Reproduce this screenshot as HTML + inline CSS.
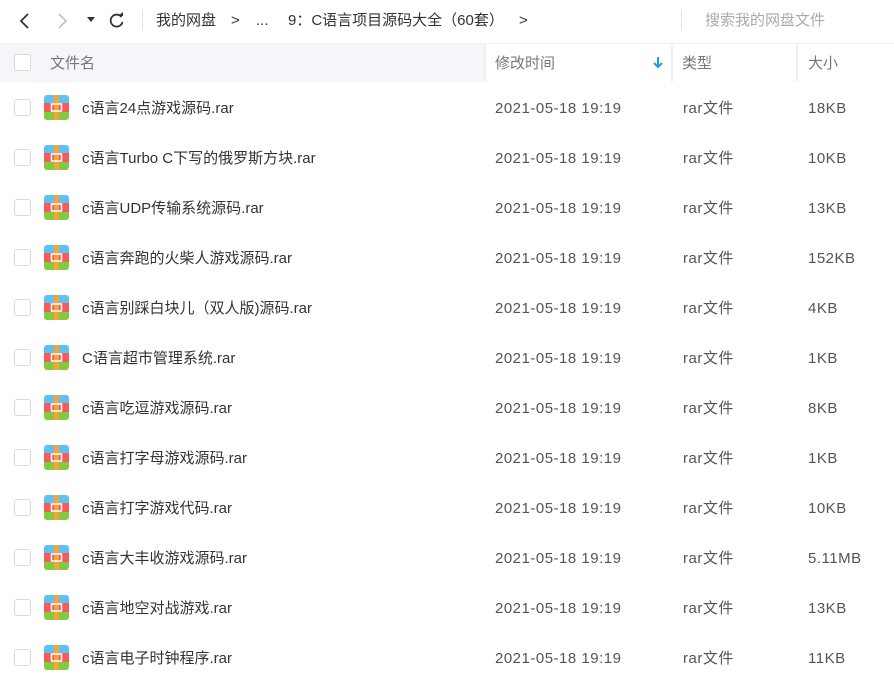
<!DOCTYPE html>
<html><head><meta charset="utf-8"><style>
*{margin:0;padding:0;box-sizing:border-box}
body{width:894px;height:696px;background:#fff;font-family:"Liberation Sans","Noto Sans CJK SC",sans-serif;color:#333;font-size:15px;position:relative;overflow:hidden}
.top{position:absolute;left:0;top:0;width:894px;height:44px;background:#fff;border-bottom:1px solid #eef0f4}
.t{position:absolute;top:11px;line-height:20px;font-size:15px;white-space:nowrap;color:#333}
.hdr{position:absolute;top:44px;left:0;width:894px;height:38px;background:#fff}
.hn{position:absolute;left:0;top:0;width:484px;height:38px;background:#f5f6f9}
.sep{position:absolute;top:0;width:2px;height:38px;background:#eef0f3}
.h{position:absolute;top:10px;line-height:20px;color:#777;font-size:15px}
.cb{position:absolute;left:14px;width:17px;height:17px;border:1px solid #d8dadf;border-radius:3px;background:#fff}
.row{position:absolute;left:0;width:894px;height:50px}
.row .cb{top:16px}
.ic{position:absolute;left:44px;top:12px;width:25px;height:25px;border-radius:3px;overflow:hidden}
.c{position:absolute;top:16px;line-height:20px;font-size:15px;color:#333;white-space:nowrap}
.d{color:#555;letter-spacing:.5px}
</style></head><body>
<div class="top">
<svg style="position:absolute;left:18px;top:12px" width="14" height="18"><path d="M10 2L3 9L10 16" stroke="#333" stroke-width="1.8" fill="none"/></svg>
<svg style="position:absolute;left:55px;top:12px" width="14" height="18"><path d="M4 2L11 9L4 16" stroke="#bbb" stroke-width="1.5" fill="none"/></svg>
<svg style="position:absolute;left:87px;top:16px" width="9" height="8"><path d="M0 1L8 1L4 6Z" fill="#333"/></svg>
<svg style="position:absolute;left:107px;top:11px" width="20" height="20"><path d="M14.5 6A6 6 0 1 0 15.5 11" stroke="#333" stroke-width="1.8" fill="none"/><path d="M11 5L16 5L16 1Z" fill="#333"/></svg>
<div style="position:absolute;left:142px;top:10px;width:1px;height:20px;background:#e4e6ea"></div>
<div class="t" style="left:156px">我的网盘</div>
<div class="t" style="left:231px">&gt;</div>
<div class="t" style="left:256px">...</div>
<div class="t" style="left:288px">9：C语言项目源码大全（60套）</div>
<div class="t" style="left:519px">&gt;</div>
<div style="position:absolute;left:681px;top:10px;width:1px;height:20px;background:#e4e6ea"></div>
<div class="t" style="left:705px;color:#aaa">搜索我的网盘文件</div>
</div>
<div class="hdr">
<div class="hn"></div>
<div class="cb" style="top:10px"></div>
<div class="h" style="left:50px">文件名</div>
<div class="sep" style="left:484px"></div>
<div class="h" style="left:495px">修改时间</div>
<svg style="position:absolute;left:653px;top:12px" width="10" height="14"><path d="M5 1V11M1 7L5 11L9 7" stroke="#1e9bf0" stroke-width="2" fill="none"/></svg>
<div class="sep" style="left:671px"></div>
<div class="h" style="left:682px">类型</div>
<div class="sep" style="left:796px"></div>
<div class="h" style="left:808px">大小</div>
</div>
<div id="rows"></div>
<script>
var f=[["c语言24点游戏源码.rar","18KB"],["c语言Turbo C下写的俄罗斯方块.rar","10KB"],["c语言UDP传输系统源码.rar","13KB"],["c语言奔跑的火柴人游戏源码.rar","152KB"],["c语言别踩白块儿（双人版)源码.rar","4KB"],["C语言超市管理系统.rar","1KB"],["c语言吃逗游戏源码.rar","8KB"],["c语言打字母游戏源码.rar","1KB"],["c语言打字游戏代码.rar","10KB"],["c语言大丰收游戏源码.rar","5.11MB"],["c语言地空对战游戏.rar","13KB"],["c语言电子时钟程序.rar","11KB"]];
var h="";
f.forEach(function(r,i){
h+='<div class="row" style="top:'+(83+i*50)+'px"><div class="cb"></div><div class="ic"><svg width="25" height="25"><rect width="25" height="8" fill="#5bc2f2"/><rect y="8" width="25" height="9" fill="#f45c5c"/><rect y="17" width="25" height="8" fill="#80cc3e"/><rect x="10" width="5" height="25" fill="#f6a43a"/><rect x="7.5" y="9" width="10" height="7" fill="none" stroke="#fff" stroke-width="1.5"/></svg></div><div class="c" style="left:82px">'+r[0]+'</div><div class="c d" style="left:495px">2021-05-18 19:19</div><div class="c d" style="left:683px">rar文件</div><div class="c d" style="left:808px">'+r[1]+'</div></div>';
});
document.getElementById("rows").innerHTML=h;
</script>
</body></html>
